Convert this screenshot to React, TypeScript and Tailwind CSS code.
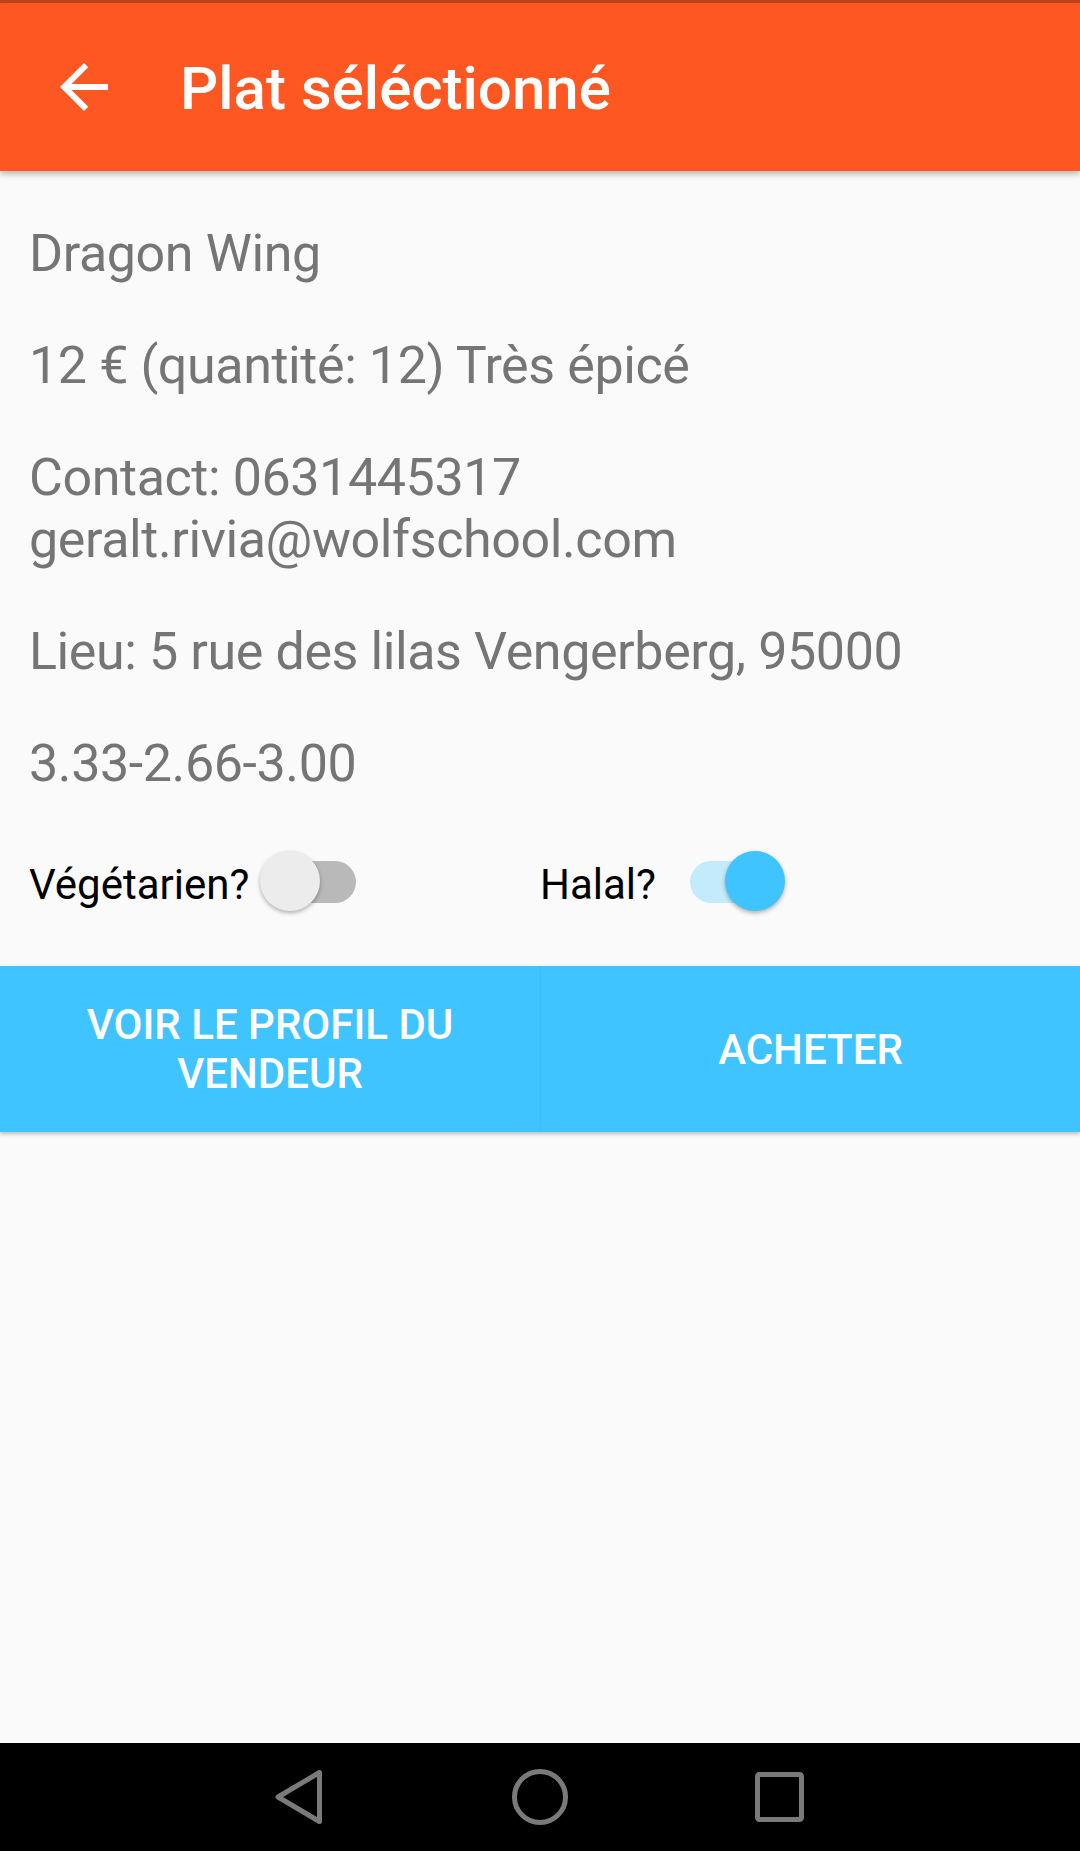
import { useState } from 'react'

type ToggleProps = {
  on: boolean
  onChange: () => void
}

function Toggle({ on, onChange }: ToggleProps) {
  return (
    <button onClick={onChange} className="relative w-[100px] h-[60px] shrink-0">
      <span
        className={`absolute top-[10px] h-[42px] w-[94px] rounded-full ${
          on ? 'left-[2px] bg-[#C4EBFB]' : 'left-[4px] bg-[#B9B9B9]'
        }`}
      />
      <span
        className={`absolute top-0 h-[60px] w-[60px] rounded-full shadow-[0_2px_4px_rgba(0,0,0,0.3)] ${
          on ? 'left-[37px] bg-[#40C4FF]' : 'left-[2px] bg-[#ECECEC]'
        }`}
      />
    </button>
  )
}

export default function App() {
  const [vege, setVege] = useState(false)
  const [halal, setHalal] = useState(true)

  return (
    <div className="w-[1080px] h-[1851px] bg-[#FAFAFA] flex flex-col font-['Roboto',sans-serif] overflow-hidden">
      <div className="h-[3px] bg-[#C1431A]" />

      {/* Toolbar */}
      <div className="relative z-10 h-[168px] bg-[#FF5722] flex items-center shadow-[0_3px_6px_rgba(0,0,0,0.28)]">
        <svg viewBox="0 0 24 24" className="ml-[48px] w-[72px] h-[72px]" fill="#FFFFFF">
          <path d="M20 11H7.83l5.59-5.59L12 4l-8 8 8 8 1.41-1.41L7.83 13H20v-2z" />
        </svg>
        <h1 className="ml-[60px] pt-[4px] text-[60px] leading-[70px] font-medium text-white">
          Plat séléctionné
        </h1>
      </div>

      {/* Details */}
      <div className="pt-[52px] flex flex-col gap-[50px] text-[52px] leading-[62px] tracking-[-0.4px] text-[#757575]">
        <p className="pl-[29px]">Dragon Wing</p>
        <p className="pl-[29px]">12 € (quantité: 12) Très épicé</p>
        <p className="pl-[29px]">
          Contact: 0631445317
          <br />
          geralt.rivia@wolfschool.com
        </p>
        <p className="pl-[29px]">Lieu: 5 rue des lilas Vengerberg, 95000</p>
        <p className="pl-[29px]">3.33-2.66-3.00</p>
      </div>

      {/* Options */}
      <div className="mt-[56px] grid grid-cols-2 text-[42px] leading-[49px] text-black">
        <div className="flex items-start pl-[29px]">
          <span className="w-[229px] mt-[9px]">Végétarien?</span>
          <Toggle on={vege} onChange={() => setVege(!vege)} />
        </div>
        <div className="flex items-start">
          <span className="w-[148px] mt-[9px]">Halal?</span>
          <Toggle on={halal} onChange={() => setHalal(!halal)} />
        </div>
      </div>

      {/* Actions */}
      <div className="mt-[55px] h-[166px] grid grid-cols-2 bg-[#40C4FF] shadow-[0_2px_4px_rgba(0,0,0,0.25)] text-[42px] leading-[49px] font-medium text-white">
        <button className="bg-[#40C4FF] flex items-center justify-center text-center px-[60px]">
          VOIR LE PROFIL DU VENDEUR
        </button>
        <button className="bg-[#40C4FF] border-l border-[#3DBBF3] flex items-center justify-center text-center">
          ACHETER
        </button>
      </div>

      {/* Navigation bar */}
      <div className="mt-auto h-[108px] bg-black flex justify-center items-center">
        <div className="w-[242px] flex justify-center">
          <svg viewBox="0 0 60 60" className="w-[60px] h-[60px]" fill="none" stroke="#7A7A7A" strokeWidth="5" strokeLinejoin="round">
            <path d="M51.5 5.5V54.5L10 30Z" />
          </svg>
        </div>
        <div className="w-[242px] flex justify-center">
          <svg viewBox="0 0 60 60" className="w-[60px] h-[60px]" fill="none" stroke="#7A7A7A" strokeWidth="5">
            <circle cx="30" cy="30" r="25.5" />
          </svg>
        </div>
        <div className="w-[242px] flex justify-center">
          <svg viewBox="0 0 60 60" className="w-[60px] h-[60px]" fill="none" stroke="#7A7A7A" strokeWidth="5">
            <rect x="5.5" y="7.5" width="44" height="45" rx="2" />
          </svg>
        </div>
      </div>
    </div>
  )
}
